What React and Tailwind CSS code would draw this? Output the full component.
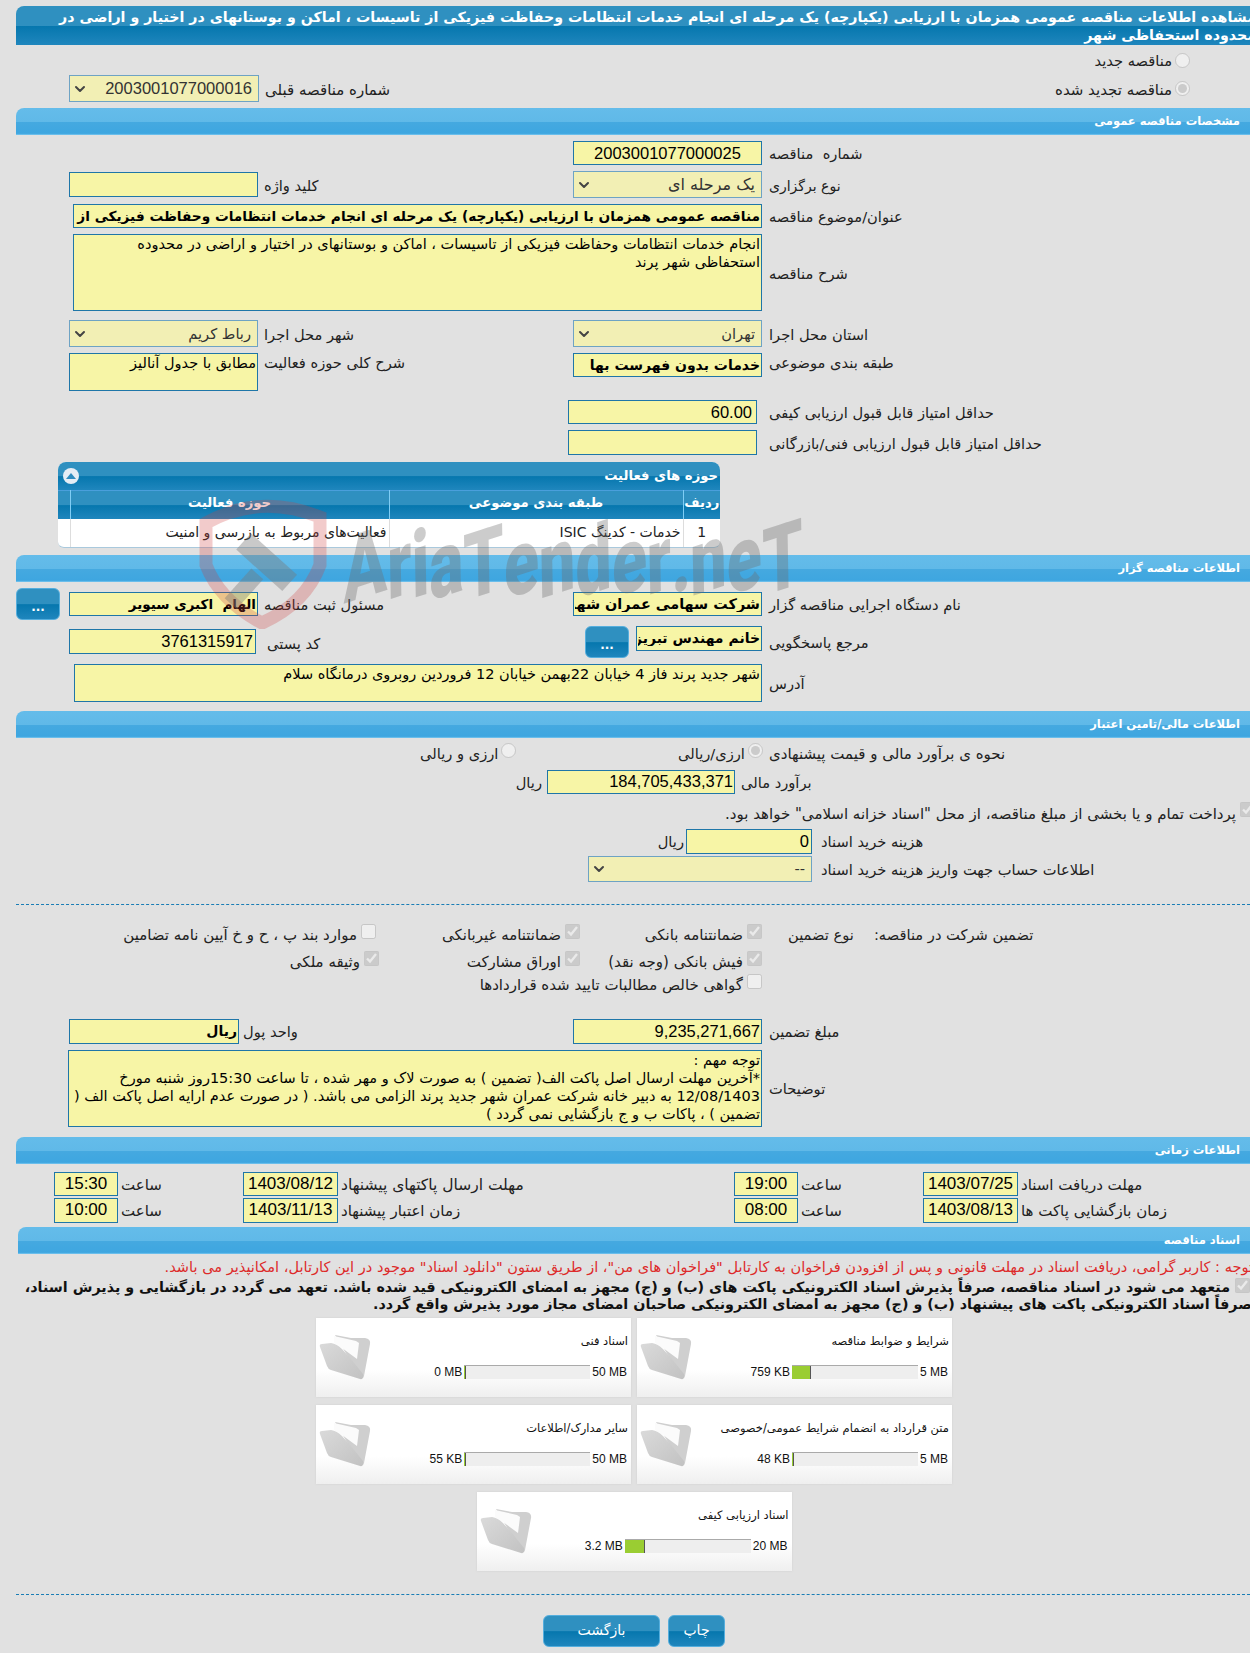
import React from 'react';
import { ChevronDown } from 'lucide-react';

const darkBar = 'bg-[linear-gradient(#2f90c0_0%,#2f90c0_50%,#0677ae_52%,#1f86bd_100%)]';
const lightBar = 'bg-[linear-gradient(#64bcea_0%,#60b9e8_50%,#45a9e0_52%,#3ea6e0_94%,#7cc8f0_100%)]';
const num = "font-['Liberation_Sans',sans-serif] text-[16.5px]";
const date = "font-['Liberation_Sans',sans-serif] text-[17px] text-center";

const Label = ({ className = '', children }) => (
  <span dir="rtl" className={`whitespace-nowrap pt-[2px] leading-[20px] text-[#222] ${className}`}>{children}</span>
);

const Inp = ({ className = '', value = '' }) => (
  <input
    readOnly
    dir="rtl"
    value={value}
    className={`block shrink-0 border border-[#1f76a8] bg-[#f7f5a6] px-[1px] text-black outline-none ${className}`}
  />
);

const Area = ({ className = '', value }) => (
  <textarea
    readOnly
    dir="rtl"
    value={value}
    className={`block shrink-0 resize-none overflow-hidden border border-[#1f76a8] bg-[#f7f5a6] px-[1px] text-[14.5px] leading-[18px] text-black outline-none ${className}`}
  />
);

const Sel = ({ className = '', value }) => (
  <div className={`relative shrink-0 ${className}`}>
    <select
      disabled
      dir="rtl"
      value={value}
      onChange={() => {}}
      className="block h-full w-full appearance-none border border-[#6ea3c4] bg-[#f2efb4] pr-[6px] text-[#333] opacity-100 outline-none"
    >
      <option value={value}>{value}</option>
    </select>
    <ChevronDown size={16} strokeWidth={3} className="absolute left-[3px] top-1/2 -translate-y-1/2 text-[#444]" />
  </div>
);

const Radio = ({ checked = false, className = '' }) => (
  <input type="radio" disabled checked={checked} readOnly className={`h-[15px] w-[15px] shrink-0 ${className}`} />
);

const Check = ({ checked = false, className = '' }) => (
  <input type="checkbox" disabled checked={checked} readOnly className={`h-[15px] w-[15px] shrink-0 ${className}`} />
);

const CheckText = ({ checked, className = '', children }) => (
  <div dir="rtl" className={`flex items-center gap-[4px] ${className}`}>
    <Check checked={checked} className="-mt-[4px]" />
    <Label className="text-[15px]">{children}</Label>
  </div>
);

const Section = ({ className = '', children }) => (
  <div
    dir="rtl"
    className={`flex h-[27px] items-center rounded-tl-lg pr-[10px] pt-[1px] text-[11.5px] font-bold text-white ${lightBar} ${className}`}
  >
    {children}
  </div>
);

const DotsButton = ({ className = '' }) => (
  <button
    className={`flex h-[32px] w-[44px] shrink-0 items-end justify-center rounded-md border border-[#55aedd] pb-[5px] text-[12px] font-bold leading-[14px] text-white ${darkBar} ${className}`}
  >
    ...
  </button>
);

const Folder = () => (
  <svg width="52" height="47" viewBox="0 0 52 47" className="shrink-0 blur-[0.4px]">
    <defs>
      <linearGradient id="folderFront" x1="0" y1="0" x2="1" y2="1">
        <stop offset="0" stopColor="#dadada" />
        <stop offset="1" stopColor="#c2c2c2" />
      </linearGradient>
    </defs>
    <path d="M16 1 L32 4 L46 4 Q52 5 51 10 L45 42 Q44 46 41 43 Z" fill="#cfcfcf" />
    <path d="M15 2 L37 7 L40 9 L38 25 L23 14 L15 9 Z" fill="#fbfbfb" />
    <path
      d="M1 13 Q0 10 3 10 L12 9 Q18 10 23 15 L32 25 L44 40 Q45 46 41 45 L12 36 Q9 35 8 32 Z"
      fill="url(#folderFront)"
    />
  </svg>
);

const DocCard = ({ title, used, total, pct }) => (
  <div className="flex h-[79px] w-[315px] bg-[linear-gradient(#ffffff_0%,#ffffff_65%,#efefef_100%)] shadow-[0_0_2px_#cfcfcf]" dir="ltr">
    <div className="ml-[3px] mt-[16px]">
      <Folder />
    </div>
    <div className="flex flex-1 flex-col items-end pr-[3px]">
      <div dir="rtl" className="mt-[13px] whitespace-nowrap text-[11.5px] leading-[20px] text-[#111]">{title}</div>
      <div className="mr-[1px] mt-[14px] flex items-center font-['Liberation_Sans',sans-serif] text-[12px] leading-[14px] text-[#111]">
        <span className="mr-[2px] whitespace-nowrap">{used}</span>
        <div className="flex h-[14px] w-[126px] border-t border-[#aaaaaa] bg-[#eeeeee]">
          <div className="h-full border-l border-r border-[#555] border-l-transparent bg-[#9acd32]" style={{ width: `${pct}%` }} />
        </div>
        <span className="ml-[2px] whitespace-nowrap">{total}</span>
      </div>
    </div>
  </div>
);

const watermark = 'AriaTender.neT'.split('');

const Watermark = () => (
  <div className="pointer-events-none absolute left-0 top-0 z-10">
    <svg width="130" height="130" viewBox="0 0 130 130" className="absolute left-[198px] top-[499px]">
      <path
        d="M8 24 Q62 -6 122 18 L122 66 Q108 104 64 124 Q22 102 8 66 Z"
        fill="none"
        stroke="#cf3f3f"
        strokeOpacity="0.27"
        strokeWidth="13"
      />
      <g fill="#777" fillOpacity="0.4" transform="rotate(42 62 72)">
        <rect x="30" y="50" width="62" height="22" />
        <rect x="54" y="76" width="16" height="40" />
      </g>
    </svg>
    <div className="absolute left-[343px] top-[516px] flex origin-left -rotate-[1deg] scale-x-[0.7] whitespace-nowrap font-['Roboto',sans-serif] text-[92px] font-black leading-[100px] text-[#6e6e6e]/35">
      {watermark.map((c, i) => (
        <span key={i} className="inline-block -skew-y-[12deg]">
          {c}
        </span>
      ))}
    </div>
  </div>
);

export default function App() {
  return (
    <div className="relative h-[1653px] w-[1250px] overflow-hidden bg-[#e1e1e1] font-['DejaVu_Sans',sans-serif] text-[14.67px]">
      <Watermark />

      {/* title */}
      <div
        dir="rtl"
        className={`ml-[16px] mt-[6px] h-[39px] w-[1240px] rounded-tl-lg text-[14.2px] font-bold leading-[18px] text-white ${darkBar}`}
      >
        <div className="whitespace-nowrap pt-[2px]">
          مشاهده اطلاعات مناقصه عمومی همزمان با ارزیابی (یکپارچه) یک مرحله ای انجام خدمات انتظامات وحفاظت فیزیکی از تاسیسات ، اماکن و بوستانهای در اختیار و اراضی در
          <br />
          محدوده استحفاظی شهر
        </div>
      </div>

      <div dir="rtl" className="mt-[3px] flex h-[24px] items-center gap-[3px] pr-[60px]">
        <Radio />
        <Label>مناقصه جدید</Label>
      </div>
      <div className="mt-[3px] flex h-[27px] items-center justify-between pl-[69px] pr-[60px]">
        <div className="flex items-center gap-[6px]">
          <Sel className={`h-[27px] w-[190px] ${num}`} value="2003001077000016" />
          <Label className="text-[15px]">شماره مناقصه قبلی</Label>
        </div>
        <div dir="rtl" className="flex items-center gap-[3px]">
          <Radio checked />
          <Label className="text-[15px]">مناقصه تجدید شده</Label>
        </div>
      </div>

      <Section className="ml-[16px] mt-[6px]">مشخصات مناقصه عمومی</Section>

      <div className="mt-[6px] flex h-[24px] items-center pl-[573px]">
        <Inp className={`h-[24px] w-[189px] text-center ${num}`} value="2003001077000025" />
        <Label className="ml-[7px]">شماره&nbsp;&nbsp;مناقصه</Label>
      </div>
      <div className="mt-[6px] flex h-[27px] items-center">
        <div className="flex w-[573px] items-center gap-[6px] pl-[69px]">
          <Inp className="h-[25px] w-[189px]" />
          <Label>کلید واژه</Label>
        </div>
        <Sel className="h-[27px] w-[189px] text-[16px]" value="یک مرحله ای" />
        <Label className="ml-[7px] text-[14px]">نوع برگزاری</Label>
      </div>
      <div className="mt-[6px] flex h-[24px] items-center pl-[73px]">
        <Inp
          className="h-[24px] w-[689px] text-[13.7px] font-bold"
          value="مناقصه عمومی همزمان با ارزیابی (یکپارچه) یک مرحله ای انجام خدمات انتظامات وحفاظت فیزیکی از تاسیسات ، اماکن و بوستانهای در اختیار و اراضی در محدوده استحفاظی شهر"
        />
        <Label className="ml-[7px]">عنوان/موضوع مناقصه</Label>
      </div>
      <div className="mt-[6px] flex h-[77px] items-center pl-[73px]">
        <Area
          className="h-[77px] w-[689px]"
          value="انجام خدمات انتظامات وحفاظت فیزیکی از تاسیسات ، اماکن و بوستانهای در اختیار و اراضی در محدوده استحفاظی شهر پرند"
        />
        <Label className="ml-[7px]">شرح مناقصه</Label>
      </div>
      <div className="mt-[9px] flex h-[27px] items-center">
        <div className="flex w-[573px] items-center gap-[6px] pl-[69px]">
          <Sel className="h-[27px] w-[189px]" value="رباط کریم" />
          <Label>شهر محل اجرا</Label>
        </div>
        <Sel className="h-[27px] w-[189px]" value="تهران" />
        <Label className="ml-[7px]">استان محل اجرا</Label>
      </div>
      <div className="mt-[6px] flex h-[38px] items-start">
        <div className="flex w-[573px] items-start gap-[6px] pl-[69px]">
          <Area className="h-[38px] w-[189px]" value="مطابق با جدول آنالیز" />
          <Label className="-mt-[2px]">شرح کلی حوزه فعالیت</Label>
        </div>
        <Inp className="h-[24px] w-[189px] text-[14px] font-bold" value="خدمات بدون فهرست بها" />
        <Label className="-mt-[2px] ml-[7px]">طبقه بندی موضوعی</Label>
      </div>
      <div className="mt-[9px] flex h-[24px] items-center pl-[568px]">
        <Inp className={`h-[24px] w-[189px] pr-[4px] ${num}`} value="60.00" />
        <Label className="ml-[12px]">حداقل امتیاز قابل قبول ارزیابی کیفی</Label>
      </div>
      <div className="mt-[6px] flex h-[25px] items-center pl-[568px]">
        <Inp className="h-[25px] w-[189px]" />
        <Label className="ml-[12px]">حداقل امتیاز قابل قبول ارزیابی فنی/بازرگانی</Label>
      </div>

      {/* activity panel */}
      <div className="ml-[58px] mt-[7px] w-[662px] overflow-hidden rounded-t-lg rounded-b-md border-b border-[#a9c9dd] bg-white">
        <div dir="rtl" className={`flex h-[28px] items-center justify-between pl-[5px] pr-[2px] text-[13.2px] font-bold text-white ${darkBar}`}>
          <span>حوزه های فعالیت</span>
          <span className="flex h-[16px] w-[16px] items-center justify-center rounded-full bg-[#e5edf5]">
            <svg width="10" height="6" viewBox="0 0 10 6">
              <path d="M5 0 L10 6 L0 6 Z" fill="#2f8cc0" />
            </svg>
          </span>
        </div>
        <table dir="rtl" className="w-full table-fixed border-collapse">
          <colgroup>
            <col className="w-[37px]" />
            <col className="w-[294px]" />
            <col className="w-[319px]" />
            <col className="w-[12px]" />
          </colgroup>
          <thead className={`${darkBar} text-[13.2px] text-white`}>
            <tr className="h-[28px] border-t border-[#4a9fdc]">
              <th className="pb-[3px] font-bold">ردیف</th>
              <th className="border-r border-[#7fcdf5] pb-[3px] font-bold">طبقه بندی موضوعی</th>
              <th className="border-r border-[#7fcdf5] pb-[3px] font-bold">حوزه فعالیت</th>
              <th className="border-r border-[#7fcdf5]" />
            </tr>
          </thead>
          <tbody>
            <tr className="h-[28px] text-[14px] text-[#222]">
              <td className="text-center">1</td>
              <td className="border-r border-[#dddddd] pr-[2px]">خدمات - کدینگ ISIC</td>
              <td className="whitespace-nowrap border-r border-[#dddddd] pr-[2px]">فعالیت‌های مربوط به بازرسی و امنیت</td>
              <td className="border-r border-[#dddddd]" />
            </tr>
          </tbody>
        </table>
      </div>

      <Section className="ml-[16px] mt-[7px]">اطلاعات مناقصه گزار</Section>

      <div className="mt-[6px] flex h-[32px] items-center">
        <div className="flex w-[573px] items-center pl-[16px]">
          <DotsButton />
          <Inp className="ml-[9px] h-[24px] w-[189px] text-[13.5px] font-bold" value="الهام  اکبری سیویر" />
          <Label className="ml-[6px]">مسئول ثبت مناقصه</Label>
        </div>
        <Inp className="h-[24px] w-[189px] text-[14.4px] font-bold" value="شرکت سهامی عمران شهر جدید پرند" />
        <Label className="ml-[7px]">نام دستگاه اجرایی مناقصه گزار</Label>
      </div>
      <div className="mt-[6px] flex h-[32px] items-start">
        <div className="flex w-[573px] items-start pl-[69px]">
          <Inp className={`mt-[3px] h-[25px] w-[187px] pr-[2px] ${num}`} value="3761315917" />
          <Label className="ml-[11px] mt-[6px]">کد پستی</Label>
        </div>
        <DotsButton className="ml-[12px]" />
        <Inp className="ml-[7px] h-[25px] w-[126px] text-[14px] font-bold" value="خانم مهندس تبریز" />
        <Label className="ml-[7px] mt-[5px]">مرجع پاسخگویی</Label>
      </div>
      <div className="mt-[6px] flex h-[38px] items-center pl-[74px]">
        <Area className="h-[38px] w-[688px]" value="شهر جدید پرند فاز 4 خیابان 22بهمن خیابان 12 فروردین روبروی درمانگاه سلام" />
        <Label className="ml-[7px]">آدرس</Label>
      </div>

      <Section className="ml-[16px] mt-[9px]">اطلاعات مالی/تامین اعتبار</Section>

      <div className="mt-[2px] flex h-[26px] items-center pl-[420px]">
        <div className="flex w-[258px] items-center gap-[3px]">
          <Label>ارزی و ریالی</Label>
          <Radio className="-mt-[4px]" />
        </div>
        <div className="flex w-[91px] items-center gap-[3px]">
          <Label>ارزی/ریالی</Label>
          <Radio checked className="-mt-[4px]" />
        </div>
        <Label className="text-[15px]">نحوه ی برآورد مالی و قیمت پیشنهادی</Label>
      </div>
      <div className="mt-[4px] flex h-[24px] items-center pl-[518px]">
        <Label className="w-[29px] pr-[5px]">ریال</Label>
        <Inp className={`h-[24px] w-[188px] ${num}`} value="184,705,433,371" />
        <Label className="ml-[6px]">برآورد مالی</Label>
      </div>
      <div dir="rtl" className="-mr-[5px] mt-[6px] flex h-[26px] items-center gap-[4px]">
        <Check checked className="-mt-[6px]" />
        <Label className="text-[15px]">پرداخت تمام و یا بخشی از مبلغ مناقصه، از محل "اسناد خزانه اسلامی" خواهد بود.</Label>
      </div>
      <div className="mt-[3px] flex h-[25px] items-center pl-[662px]">
        <Label className="w-[24px] pr-[2px]">ریال</Label>
        <Inp className={`h-[25px] w-[126px] pr-[2px] ${num}`} value="0" />
        <Label className="ml-[9px]">هزینه خرید اسناد</Label>
      </div>
      <div className="mt-[2px] flex h-[26px] items-center pl-[588px]">
        <Sel className="h-[26px] w-[224px]" value="--" />
        <Label className="ml-[9px]">اطلاعات حساب جهت واریز هزینه خرید اسناد</Label>
      </div>

      <div className="ml-[16px] mt-[22px] border-t border-dashed border-[#1a7db5]" />

      {/* guarantee */}
      <div className="mt-[18px] grid h-[27px] grid-cols-[380px_200px_182px_1fr] items-start">
        <CheckText className="pr-[4px]">موارد بند پ ، ح و خ آیین نامه تضامین</CheckText>
        <CheckText checked>ضمانتنامه غیربانکی</CheckText>
        <CheckText checked>ضمانتنامه بانکی</CheckText>
        <div className="flex pl-[26px]">
          <Label>نوع تضمین</Label>
          <Label className="ml-[20px]">تضمین شرکت در مناقصه:</Label>
        </div>
      </div>
      <div className="grid h-[23px] grid-cols-[380px_200px_182px_1fr] items-start">
        <CheckText checked className="pr-[1px]">وثیقه ملکی</CheckText>
        <CheckText checked>اوراق مشارکت</CheckText>
        <CheckText checked>فیش بانکی (وجه نقد)</CheckText>
      </div>
      <div className="grid h-[24px] grid-cols-[580px_182px_1fr] items-start">
        <div />
        <div className="flex justify-end">
          <CheckText>گواهی خالص مطالبات تایید شده قراردادها</CheckText>
        </div>
      </div>

      <div className="mt-[22px] flex h-[25px] items-center">
        <div className="flex w-[573px] items-center gap-[4px] pl-[69px]">
          <Inp className="h-[25px] w-[170px] text-[14px] font-bold" value="ریال" />
          <Label>واحد پول</Label>
        </div>
        <Inp className={`h-[25px] w-[189px] ${num}`} value="9,235,271,667" />
        <Label className="ml-[7px]">مبلغ تضمین</Label>
      </div>
      <div className="mt-[6px] flex h-[77px] items-center pl-[68px]">
        <Area
          className="h-[77px] w-[694px]"
          value={'توجه مهم :\n*آخرین مهلت ارسال اصل پاکت الف( تضمین ) به صورت لاک و مهر شده ، تا ساعت 15:30روز شنبه مورخ 12/08/1403 به دبیر خانه شرکت عمران شهر جدید پرند الزامی می باشد. ( در صورت عدم ارایه اصل پاکت الف ( تضمین ) ، پاکات ب و ج بازگشایی نمی گردد )'}
        />
        <Label className="ml-[7px]">توضیحات</Label>
      </div>

      <Section className="ml-[16px] mt-[10px]">اطلاعات زمانی</Section>

      <div className="mt-[8px] flex h-[24px] items-center pl-[54px] text-[15px]">
        <div className="flex w-[189px] items-center gap-[3px]">
          <Inp className={`h-[24px] w-[64px] ${date}`} value="15:30" />
          <Label>ساعت</Label>
        </div>
        <div className="flex w-[491px] items-center gap-[3px]">
          <Inp className={`h-[24px] w-[95px] ${date}`} value="1403/08/12" />
          <Label className="text-[15.5px]">مهلت ارسال پاکتهای پیشنهاد</Label>
        </div>
        <div className="flex w-[189px] items-center gap-[3px]">
          <Inp className={`h-[24px] w-[64px] ${date}`} value="19:00" />
          <Label>ساعت</Label>
        </div>
        <div className="flex items-center gap-[3px]">
          <Inp className={`h-[24px] w-[95px] ${date}`} value="1403/07/25" />
          <Label>مهلت دریافت اسناد</Label>
        </div>
      </div>
      <div className="mt-[2px] flex h-[25px] items-center pl-[54px] text-[15px]">
        <div className="flex w-[189px] items-center gap-[3px]">
          <Inp className={`h-[25px] w-[64px] ${date}`} value="10:00" />
          <Label>ساعت</Label>
        </div>
        <div className="flex w-[491px] items-center gap-[3px]">
          <Inp className={`h-[25px] w-[95px] ${date}`} value="1403/11/13" />
          <Label>زمان اعتبار پیشنهاد</Label>
        </div>
        <div className="flex w-[189px] items-center gap-[3px]">
          <Inp className={`h-[25px] w-[64px] ${date}`} value="08:00" />
          <Label>ساعت</Label>
        </div>
        <div className="flex items-center gap-[3px]">
          <Inp className={`h-[25px] w-[95px] ${date}`} value="1403/08/13" />
          <Label>زمان بازگشایی پاکت ها</Label>
        </div>
      </div>

      <Section className="ml-[18px] mt-[4px]">اسناد مناقصه</Section>

      <div dir="rtl" className="-mr-[3px] mt-[3px] h-[20px] whitespace-nowrap text-[14.55px] leading-[20px] text-[#dd2a2a]">
        توجه : کاربر گرامی، دریافت اسناد در مهلت قانونی و پس از افزودن فراخوان به کارتابل "فراخوان های من"، از طریق ستون "دانلود اسناد" موجود در این کارتابل، امکانپذیر می باشد.
      </div>
      <div dir="rtl" className="-mr-[2px] mt-[1px] h-[34px] whitespace-nowrap text-[14.3px] font-bold leading-[17px] text-[#111]">
        <Check checked className="ml-[5px] mr-[2px] inline-block align-[-1px]" />
        متعهد می شود در اسناد مناقصه، صرفاً پذیرش اسناد الکترونیکی پاکت های (ب) و (ج) مجهز به امضای الکترونیکی قید شده باشد. تعهد می گردد در بازگشایی و پذیرش اسناد،
        <br />
        صرفاً اسناد الکترونیکی پاکت های پیشنهاد (ب) و (ج) مجهز به امضای الکترونیکی صاحبان امضای مجاز مورد پذیرش واقع گردد.
      </div>

      <div dir="rtl" className="ml-[314px] mt-[6px] flex w-[640px] flex-wrap justify-center gap-x-[6px] gap-y-[8px]">
        <DocCard title="شرایط و ضوابط مناقصه" used="759 KB" total="5 MB" pct={15} />
        <DocCard title="اسناد فنی" used="0 MB" total="50 MB" pct={0} />
        <DocCard title="متن قرارداد به انضمام شرایط عمومی/خصوصی" used="48 KB" total="5 MB" pct={1} />
        <DocCard title="سایر مدارک/اطلاعات" used="55 KB" total="50 MB" pct={1} />
        <DocCard title="اسناد ارزیابی کیفی" used="3.2 MB" total="20 MB" pct={16} />
      </div>

      <div className="ml-[16px] mt-[23px] border-t border-dashed border-[#1a7db5]" />

      <div className="mt-[20px] flex h-[32px] gap-[8px] pl-[543px]">
        <button className={`h-[32px] w-[117px] rounded-md border border-[#55aedd] text-[14px] text-white ${darkBar}`}>بازگشت</button>
        <button className={`h-[32px] w-[57px] rounded-md border border-[#55aedd] text-[14px] text-white ${darkBar}`}>چاپ</button>
      </div>
    </div>
  );
}
